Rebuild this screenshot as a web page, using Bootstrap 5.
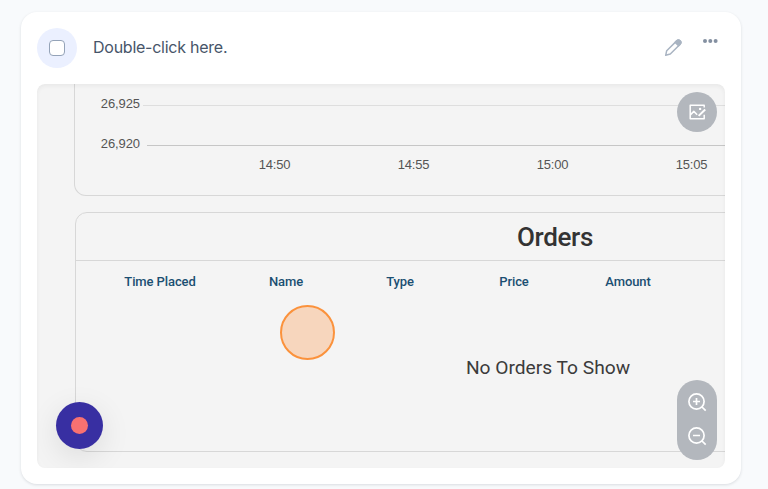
<!DOCTYPE html>
<html lang="en">
<head>
<meta charset="utf-8">
<meta name="viewport" content="width=device-width, initial-scale=1">
<title>Step</title>
<link href="https://cdn.jsdelivr.net/npm/bootstrap@5.3.0/dist/css/bootstrap.min.css" rel="stylesheet">
<style>
body{background:#f8fafc;height:489px;overflow:hidden;padding:12px 0 0 21px}
.step-card{width:720px;height:472px;border:0;border-radius:16px;box-shadow:0 1px 3px rgba(15,23,42,.13);padding:16px}
.step-head{height:56px}
.check-disc{width:40px;height:40px;background:#ebf0ff}
.check-disc .form-check-input{width:16px;height:16px;margin:0;border:1px solid #94a3b8;border-radius:4px}
.step-title{font:400 16px/24px Inter,sans-serif;letter-spacing:-.25px;color:#475569;margin:7px 0 0}
.pencil{margin:8px -8px 0 0}
.shot{width:688px;height:384px;border-radius:8px;background:#f4f4f4}
.shot::after{content:"";position:absolute;inset:0;border-radius:8px;box-shadow:inset 0 2px 4px rgba(0,0,0,.05);pointer-events:none}
.chart-panel{margin-left:37px;width:960px;height:112px;border:1px solid #d7d7d7;border-top:0;border-radius:0 0 12px 12px;font:400 13px/20px "Liberation Sans",sans-serif;letter-spacing:-.1px;color:#555}
.tick-row{height:40px}
.tick-name{width:65px;text-align:right}
.tick-line{height:1px;background:#dedede;margin:2px 0 0 3px}
.tick-line.base{background:#c6c6c6;margin-left:7px}
.axis-row{margin:-9px 0 0 130px;height:20px;letter-spacing:-.2px}
.axis-row span{width:139px;flex:none;text-align:center}
.orders-panel{margin:16px 0 0 38px;width:960px;height:240px;border:1px solid #d7d7d7;border-radius:12px;font-family:Roboto,sans-serif}
.orders-head{height:48px;border-bottom:1px solid #d7d7d7;font-size:26px;font-weight:500;color:#333;line-height:49px;letter-spacing:-.35px}
.cols{padding-left:15px;height:40px;font-size:13px;font-weight:500;color:#1b4f72;line-height:42px;letter-spacing:-.1px}
.cols span{width:114px;flex:none;text-align:center}
.cols .first{width:138px}
.empty-note{width:944px;margin-top:53px;font-size:19.2px;line-height:28px;color:#3b3b3b}
.click-spot{left:243px;top:221px;width:55px;height:55px;border:2px solid #fb923c;background:#f7d6bd}
.rec{left:19px;top:318px;width:47px;height:47px;background:#382fa2;box-shadow:0 8px 30px rgba(0,0,0,.1)}
.rec i{width:17px;height:17px;background:#f87171}
.tool{background:#b3b7bd;width:40px;right:8px;z-index:2;color:#fff;border-radius:20px}
.tool-edit{top:8px;height:40px}
.tool-zoom{top:296px;height:80px;padding:11px 0 13px}
svg{display:block}
</style>
</head>
<body>
<main class="card step-card">
  <header class="step-head d-flex align-items-start">
    <div class="check-disc rounded-circle d-flex align-items-center justify-content-center"><input class="form-check-input" type="checkbox" aria-label="Done"></div>
    <h1 class="step-title ms-3">Double-click here.</h1>
    <div class="ms-auto d-flex gap-4 me-1">
      <svg class="pencil" width="24" height="24" viewBox="0 0 24 24" fill="none" stroke="#a9b4c2" stroke-width="1.5" stroke-linejoin="round"><path d="M4.7 19.3l1-4.6L15.7 4.9a2.1 2.1 0 0 1 3.4 3.3L9.3 18Z"/><path d="M14.2 6.4l1.5-1.5a2.1 2.1 0 0 1 3.4 3.3l-1.5 1.5Z" fill="#a9b4c2"/></svg>
      <svg width="20" height="26" viewBox="0 0 20 26" fill="#8490a1"><circle cx="4" cy="13" r="2"/><circle cx="9.3" cy="13" r="2"/><circle cx="14.6" cy="13" r="2"/></svg>
    </div>
  </header>
  <section class="shot position-relative overflow-hidden">
    <div class="chart-panel">
      <div class="tick-row d-flex align-items-center"><span class="tick-name">26,925</span><div class="tick-line flex-grow-1"></div></div>
      <div class="tick-row d-flex align-items-center"><span class="tick-name">26,920</span><div class="tick-line base flex-grow-1"></div></div>
      <div class="axis-row d-flex"><span>14:50</span><span>14:55</span><span>15:00</span><span>15:05</span></div>
    </div>
    <div class="orders-panel">
      <div class="orders-head text-center">Orders</div>
      <div class="cols d-flex"><span class="first">Time Placed</span><span>Name</span><span>Type</span><span>Price</span><span>Amount</span></div>
      <div class="empty-note text-center">No Orders To Show</div>
    </div>
    <div class="click-spot position-absolute rounded-circle"></div>
    <div class="rec position-absolute rounded-circle d-flex align-items-center justify-content-center"><i class="rounded-circle"></i></div>
    <div class="tool tool-edit position-absolute d-flex align-items-center justify-content-center">
      <svg width="20" height="20" viewBox="0 0 20 20" fill="none" stroke="#fff" stroke-width="1.5" stroke-linejoin="round"><path d="M17.2 5.6V3.2H3.2v13.6h14v-4M3.6 12.6l3.2-3.2 3.4 3.4"/><path d="M11.6 13.9l6.6-6.4" stroke-width="2"/><circle cx="13.1" cy="6.9" r="1.2" fill="#fff" stroke="none"/></svg>
    </div>
    <div class="tool tool-zoom position-absolute d-flex flex-column align-items-center justify-content-between">
      <svg width="22" height="22" viewBox="0 0 22 22" fill="none" stroke="#fff" stroke-width="1.7"><circle cx="10.5" cy="10.5" r="7.6"/><path d="M16 16l3.7 3.7M7 10.5h7M10.5 7v7"/></svg>
      <svg width="22" height="22" viewBox="0 0 22 22" fill="none" stroke="#fff" stroke-width="1.7"><circle cx="10.5" cy="10.5" r="7.6"/><path d="M16 16l3.7 3.7M7 10.5h7"/></svg>
    </div>
  </section>
</main>
<script src="https://cdn.jsdelivr.net/npm/bootstrap@5.3.0/dist/js/bootstrap.bundle.min.js"></script>
</body>
</html>
